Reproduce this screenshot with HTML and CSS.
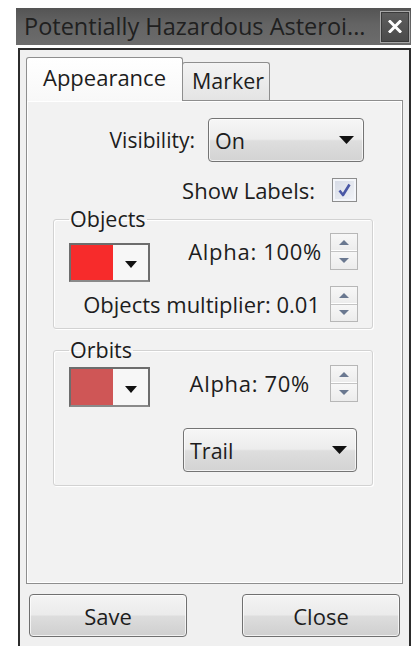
FILE: index.html
```html
<!DOCTYPE html>
<html lang="en">
<head>
<meta charset="utf-8">
<title>Potentially Hazardous Asteroids</title>
<link rel="stylesheet" href="styles.css">
</head>
<body>
<div class="window">
  <div class="titlebar">
    <span class="title">Potentially Hazardous Asteroi...</span>
    <span class="close-btn" aria-label="Close">
      <svg width="14" height="13" viewBox="0 0 14 13"><path d="M2 1.5 L12 11.5 M12 1.5 L2 11.5" stroke="#fff" stroke-width="3" stroke-linecap="square"/></svg>
    </span>
  </div>
  <div class="frame">
    <div class="tabs">
      <div class="tab tab-active">Appearance</div>
      <div class="tab tab-inactive">Marker</div>
    </div>
    <div class="pane">
      <div class="row row-visibility">
        <span class="label">Visibility:</span>
        <div class="combo combo-vis">
          <span>On</span>
          <svg class="drop" width="15" height="8" viewBox="0 0 15 8"><path d="M0 0 H15 L7.5 8 Z" fill="#111"/></svg>
        </div>
      </div>
      <div class="row row-labels">
        <span class="label label-wide">Show Labels:</span>
        <span class="checkbox">
          <svg width="17" height="17" viewBox="0 0 17 17"><path d="M3.5 8.5 L7 13 L13.5 2.5" fill="none" stroke="#4a58a6" stroke-width="2.6" stroke-linejoin="round"/></svg>
        </span>
      </div>

      <fieldset class="group group-objects">
        <legend>Objects</legend>
        <div class="grow grow-first">
          <div class="swatch-btn">
            <span class="swatch swatch-objects"></span>
            <span class="swatch-arrow"><svg width="12" height="7" viewBox="0 0 12 7"><path d="M0 0 H12 L6 7 Z" fill="#111"/></svg></span>
          </div>
          <span class="spin-text spin-text-alpha">Alpha: 100%</span>
          <span class="spinner"><span class="spin-up"></span><span class="spin-down"></span></span>
        </div>
        <div class="grow grow-second">
          <span class="spin-text">Objects multiplier: 0.01</span>
          <span class="spinner spinner-short"><span class="spin-up"></span><span class="spin-down"></span></span>
        </div>
      </fieldset>

      <fieldset class="group group-orbits">
        <legend>Orbits</legend>
        <div class="grow grow-first">
          <div class="swatch-btn swatch-btn-orbits">
            <span class="swatch swatch-orbits"></span>
            <span class="swatch-arrow"><svg width="12" height="7" viewBox="0 0 12 7"><path d="M0 0 H12 L6 7 Z" fill="#111"/></svg></span>
          </div>
          <span class="spin-text spin-text-alpha spin-text-gap">Alpha: 70%</span>
          <span class="spinner"><span class="spin-up"></span><span class="spin-down"></span></span>
        </div>
        <div class="grow grow-trail">
          <div class="combo combo-trail">
            <span>Trail</span>
            <svg class="drop" width="15" height="8" viewBox="0 0 15 8"><path d="M0 0 H15 L7.5 8 Z" fill="#111"/></svg>
          </div>
        </div>
      </fieldset>
    </div>
    <div class="buttons">
      <button class="btn" type="button">Save</button>
      <button class="btn" type="button">Close</button>
    </div>
  </div>
</div>
</body>
</html>
```
FILE: styles.css
```css
html, body {
  margin: 0;
  background: #ffffff;
}

body {
  font-family: "Open Sans", "Noto Sans", sans-serif;
  font-size: 21.5px;
  color: #1d1d1d;
  overflow: hidden;
}

.window {
  width: 395px;
  margin: 8px 0 0 16px;
}

/* ---------- title bar ---------- */
.titlebar {
  height: 37px;
  box-sizing: border-box;
  display: flex;
  align-items: center;
  justify-content: space-between;
  padding: 0 1px 0 8px;
  background: linear-gradient(#545454, #646464 45%, #6c6c6c);
}

.title {
  font-size: 23.5px;
  color: #202020;
  white-space: nowrap;
  line-height: 1;
  margin-top: 1px;
}

.close-btn {
  width: 30px;
  height: 32px;
  box-sizing: border-box;
  border: 1px solid #a8a8a8;
  box-shadow: inset 0 0 0 1px #3a3a3a;
  background: linear-gradient(#5e5e5e, #4a4a4a);
  display: flex;
  align-items: center;
  justify-content: center;
}

/* ---------- window frame ---------- */
.frame {
  margin: 3px 0 0 2px;
  border: 2px solid #2c2c2c;
  border-bottom: none;
  background: #f0f0f0;
  padding: 7px 6px 30px;
}

/* ---------- tabs ---------- */
.tabs {
  height: 43px;
  display: flex;
  align-items: flex-end;
}

.tab {
  box-sizing: border-box;
  border: 1px solid #8e8e8e;
  border-bottom: none;
  border-radius: 3px 3px 0 0;
  display: flex;
  align-items: center;
  justify-content: center;
}

.tab-active {
  position: relative;
  z-index: 1;
  width: 157px;
  height: 44px;
  margin-bottom: -1px;
  padding-bottom: 6px;
  font-size: 22px;
  background: linear-gradient(#ffffff, #f8f8f8);
}

.tab-inactive {
  width: 88px;
  height: 38px;
  margin-left: -1px;
  padding: 0 0 3px 4px;
  background: linear-gradient(#f3f3f3, #e4e4e4);
}

/* ---------- tab pane ---------- */
.pane {
  box-sizing: border-box;
  height: 484px;
  border: 1px solid #8e8e8e;
  box-shadow: inset 1px 1px 0 #ffffff, inset -1px -1px 0 #ffffff;
  background: #f2f2f2;
  display: flex;
  flex-direction: column;
  padding-top: 17px;
}

.row {
  display: flex;
  justify-content: flex-end;
  align-items: center;
}

.row-visibility {
  height: 44px;
  padding-right: 38px;
  gap: 13px;
}

.row-labels {
  height: 24px;
  margin-top: 16px;
  padding-right: 45px;
  gap: 17px;
}

.label {
  white-space: nowrap;
  font-size: 21px;
}

.label-wide {
  font-size: 22px;
}

/* ---------- combo boxes ---------- */
.combo {
  box-sizing: border-box;
  height: 44px;
  border: 1px solid #747474;
  border-radius: 4px;
  background: linear-gradient(#f6f6f6, #ececec 48%, #dedede 52%, #d3d3d3);
  box-shadow: inset 0 0 0 1px rgba(255, 255, 255, 0.7);
  display: flex;
  align-items: center;
  justify-content: space-between;
  padding: 0 9px 0 6px;
}

.combo-vis {
  width: 156px;
}

.combo-trail {
  width: 174px;
}

/* ---------- checkbox ---------- */
.checkbox {
  box-sizing: border-box;
  width: 25px;
  height: 24px;
  border: 1px solid #8d8d8d;
  box-shadow: inset 0 0 0 2px #f4f6fa;
  background: linear-gradient(135deg, #d4d9e4, #f3f5f9);
  display: flex;
  align-items: center;
  justify-content: center;
}

/* ---------- group boxes ---------- */
.group {
  box-sizing: border-box;
  width: 320px;
  margin: 0 0 0 26px;
  border: 1px solid #d2d2d2;
  border-radius: 3px;
  box-shadow: inset 1px 1px 0 #ffffff, 1px 1px 0 #ffffff;
  padding: 0 14px 0 15px;
  min-width: 0;
}

.group legend {
  line-height: 24px;
  padding: 0 1px;
}

.group-objects {
  margin-top: 5px;
  padding-bottom: 6px;
}

.group-orbits {
  margin-top: 9px;
  padding-bottom: 13px;
}

.grow {
  display: flex;
  align-items: flex-start;
  justify-content: flex-end;
}

.grow-first {
  justify-content: flex-start;
}

.grow-first .spin-text {
  margin-left: auto;
  margin-right: 8px;
}

.grow-first .spin-text-gap {
  margin-right: 20px;
}

.group-objects .grow-first .spinner {
  margin-top: 2px;
}

.group-objects .grow-first .swatch-btn {
  margin-top: 12px;
}

.group-orbits .grow-first .spinner {
  margin-top: 3px;
}

.group-orbits .grow-first .swatch-btn {
  margin-top: 5px;
}

.grow-second {
  margin-top: 4px;
}

.grow-second .spin-text {
  margin-right: 10px;
  line-height: 36px;
}

.grow-trail {
  margin-top: 21px;
  padding-right: 1px;
}

.spin-text {
  white-space: nowrap;
  font-size: 22px;
  line-height: 37px;
  align-self: flex-start;
}

.spin-text-alpha {
  letter-spacing: 0.7px;
}

.group-objects .grow-first .spin-text {
  margin-top: 2px;
}

.group-orbits .grow-first .spin-text {
  margin-top: 3px;
}

/* ---------- colour buttons ---------- */
.swatch-btn {
  box-sizing: border-box;
  width: 81px;
  height: 39px;
  border: 2px solid #6d6d6d;
  border-bottom-color: #8a8a8a;
  display: flex;
}

.swatch-btn-orbits {
  height: 40px;
}

.swatch {
  width: 42px;
}

.swatch-objects {
  background: #f72b2b;
}

.swatch-orbits {
  background: #cf5656;
}

.swatch-arrow {
  flex: 1;
  background: #f7f7f7;
  display: flex;
  align-items: center;
  justify-content: center;
  padding-top: 4px;
}

/* ---------- spin arrows ---------- */
.spinner {
  box-sizing: border-box;
  width: 28px;
  height: 37px;
  border: 1px solid #b7b7b7;
  background: #f4f4f4;
  display: flex;
  flex-direction: column;
  flex-shrink: 0;
}

.spinner-short {
  height: 36px;
}

.spin-up,
.spin-down {
  flex: 1;
  display: flex;
  align-items: center;
  justify-content: center;
  background: linear-gradient(#f7f7f7, #ececec);
}

.spin-up {
  border-bottom: 1px solid #c4c4c4;
  box-shadow: inset 0 -1px 0 #ffffff;
}

.spin-up::after,
.spin-down::after {
  content: "";
  width: 0;
  height: 0;
  border-left: 5px solid transparent;
  border-right: 5px solid transparent;
}

.spin-up::after {
  border-bottom: 5px solid #6a7890;
}

.spin-down::after {
  border-top: 5px solid #6a7890;
}

/* ---------- dialog buttons ---------- */
.buttons {
  display: flex;
  justify-content: space-between;
  padding: 0 3px;
  margin-top: 10px;
}

.btn {
  box-sizing: border-box;
  width: 158px;
  height: 43px;
  border: 1px solid #707070;
  border-radius: 4px;
  background: linear-gradient(#f4f4f4, #ebebeb 48%, #dddddd 52%, #cfcfcf);
  box-shadow: inset 0 0 0 1px rgba(255, 255, 255, 0.7);
  font-family: inherit;
  font-size: 22px;
  color: #1d1d1d;
  padding: 0;
}
```
